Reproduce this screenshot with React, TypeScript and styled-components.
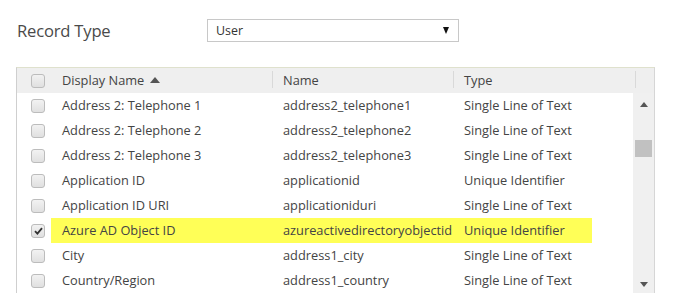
import React from "react";
import styled, { createGlobalStyle } from "styled-components";

const GlobalStyle = createGlobalStyle`
  html, body { margin: 0; padding: 0; background: #ffffff; }
  body { font-family: "Segoe UI", "Open Sans", "Noto Sans", sans-serif; color: #444; }
`;

const Page = styled.div`
  padding: 18px 0 0 16px;
  width: 683px;
  box-sizing: border-box;
`;

const TopRow = styled.div`
  display: flex;
  align-items: center;
  height: 24px;
`;

const Label = styled.div`
  width: 190px;
  padding-left: 1px;
  font-size: 16.6px;
  font-weight: 400;
  color: #4a4a4a;
  letter-spacing: -0.2px;
`;

const Select = styled.div`
  width: 252px;
  height: 23px;
  box-sizing: border-box;
  border: 1px solid #c8c8c8;
  display: flex;
  align-items: center;
  justify-content: space-between;
  padding: 0 9px 0 8px;
  font-size: 12.4px;
  color: #333;
`;

const Triangle = styled.span<{ $dir: "up" | "down"; $w: number; $h: number; $color: string }>`
  width: 0;
  height: 0;
  border-left: ${(p) => p.$w / 2}px solid transparent;
  border-right: ${(p) => p.$w / 2}px solid transparent;
  ${(p) =>
    p.$dir === "up"
      ? `border-bottom: ${p.$h}px solid ${p.$color};`
      : `border-top: ${p.$h}px solid ${p.$color};`}
  display: inline-block;
`;

const Table = styled.div`
  margin-top: 25px;
  width: 639px;
  box-sizing: border-box;
  border-left: 1px solid #cfcfcf;
  border-right: 1px solid #d6d6d6;
  border-top: 1px solid #dfe1cd;
`;

const Header = styled.div`
  display: grid;
  grid-template-columns: 33px 223px 181px 182px 18px;
  height: 25px;
  background: #efefef;
`;

const HeadCell = styled.div<{ $pad?: number; $sep?: boolean }>`
  position: relative;
  display: flex;
  align-items: center;
  padding-left: ${(p) => p.$pad ?? 10}px;
  padding-bottom: 2px;
  font-size: 12.8px;
  color: #444;
  ${(p) =>
    p.$sep
      ? `&::after { content: ""; position: absolute; right: 0; top: 3px; bottom: 5px; width: 1px; background: #d9d9d9; }`
      : ""}
`;

const SortArrow = styled.span`
  margin-left: 6px;
  display: inline-flex;
  align-items: center;
`;

const Body = styled.div`
  display: grid;
  grid-template-columns: 616px 21px;
`;

const Rows = styled.div`
  display: flex;
  flex-direction: column;
`;

const Row = styled.div<{ $highlight?: boolean }>`
  display: grid;
  grid-template-columns: 33px 223px 181px 179px;
  height: 25px;
  align-items: center;
  font-size: 12.8px;
  color: #444;
  background: ${(p) =>
    p.$highlight
      ? "linear-gradient(to right, transparent 34px, #ffff57 34px, #ffff57 575px, transparent 575px)"
      : "transparent"};
`;

const Cell = styled.div<{ $pad?: number }>`
  padding-left: ${(p) => p.$pad ?? 10}px;
  padding-bottom: 2px;
  white-space: nowrap;
  overflow: hidden;
`;

const CheckCell = styled.div`
  padding-left: 14px;
  display: flex;
  align-items: center;
`;

const Box = styled.span`
  width: 14px;
  height: 14px;
  box-sizing: border-box;
  border: 1px solid #bcbcbc;
  border-radius: 3px;
  background: linear-gradient(#f2f2f2, #e0e0e0);
  display: inline-flex;
  align-items: center;
  justify-content: center;
`;

const Scrollbar = styled.div`
  background: #f0f0f0;
  display: flex;
  flex-direction: column;
  height: 200px;
`;

const ScrollButton = styled.div<{ $h: number }>`
  height: ${(p) => p.$h}px;
  display: flex;
  align-items: center;
  justify-content: center;
  padding-left: 1px;
`;

const Track = styled.div`
  flex: 1;
  padding-left: 2px;
`;

const Thumb = styled.div`
  margin-top: 25px;
  width: 17px;
  height: 17px;
  background: #c1c1c1;
`;

const Checkbox = ({ checked }: { checked?: boolean }) => (
  <Box>
    {checked && (
      <svg width="9" height="8" viewBox="0 0 9 8">
        <path d="M1 4.2 L3.4 6.6 L8 1.2" fill="none" stroke="#333" strokeWidth="1.8" />
      </svg>
    )}
  </Box>
);

const rows = [
  ["Address 2: Telephone 1", "address2_telephone1", "Single Line of Text"],
  ["Address 2: Telephone 2", "address2_telephone2", "Single Line of Text"],
  ["Address 2: Telephone 3", "address2_telephone3", "Single Line of Text"],
  ["Application ID", "applicationid", "Unique Identifier"],
  ["Application ID URI", "applicationiduri", "Single Line of Text"],
  ["Azure AD Object ID", "azureactivedirectoryobjectid", "Unique Identifier"],
  ["City", "address1_city", "Single Line of Text"],
  ["Country/Region", "address1_country", "Single Line of Text"],
];

export default function App() {
  return (
    <Page>
      <GlobalStyle />
      <TopRow>
        <Label>Record Type</Label>
        <Select>
          <span>User</span>
          <Triangle $dir="down" $w={7} $h={7} $color="#111" />
        </Select>
      </TopRow>
      <Table>
        <Header>
          <CheckCell>
            <Checkbox />
          </CheckCell>
          <HeadCell $pad={12} $sep>
            Display Name
            <SortArrow>
              <Triangle $dir="up" $w={10} $h={6} $color="#555" />
            </SortArrow>
          </HeadCell>
          <HeadCell $sep>Name</HeadCell>
          <HeadCell $sep>Type</HeadCell>
          <HeadCell />
        </Header>
        <Body>
          <Rows>
            {rows.map((r, i) => (
              <Row key={i} $highlight={i === 5}>
                <CheckCell>
                  <Checkbox checked={i === 5} />
                </CheckCell>
                <Cell $pad={12}>{r[0]}</Cell>
                <Cell $pad={10}>{r[1]}</Cell>
                <Cell $pad={10}>{r[2]}</Cell>
              </Row>
            ))}
          </Rows>
          <Scrollbar>
            <ScrollButton $h={22}>
              <Triangle $dir="up" $w={9} $h={5} $color="#555" />
            </ScrollButton>
            <Track>
              <Thumb />
            </Track>
            <ScrollButton $h={18}>
              <Triangle $dir="down" $w={9} $h={5} $color="#555" />
            </ScrollButton>
          </Scrollbar>
        </Body>
      </Table>
    </Page>
  );
}
